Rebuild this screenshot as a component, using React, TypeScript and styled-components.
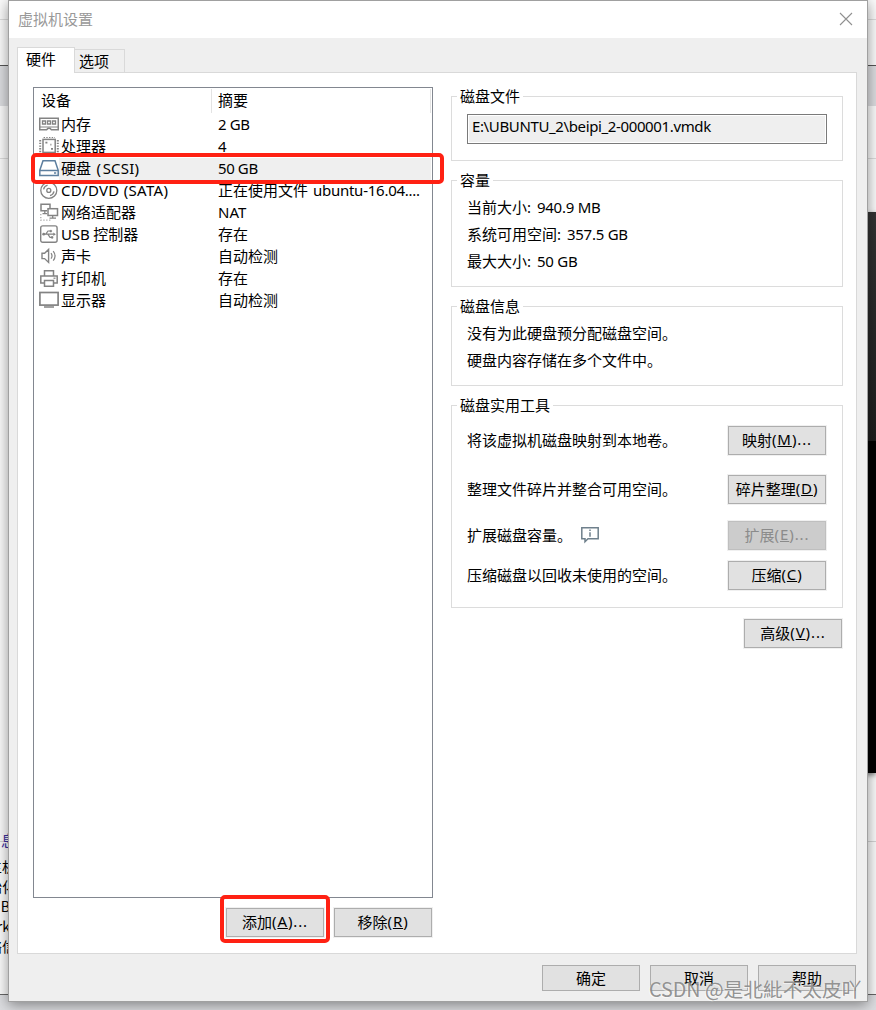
import React from 'react';
import styled, { createGlobalStyle } from 'styled-components';

const Global = createGlobalStyle`
  * { box-sizing: border-box; }
  html, body { margin: 0; padding: 0; background: #fbfbfb; }
  body {
    width: 876px;
    height: 1010px;
    overflow: hidden;
    font-family: 'Noto Sans CJK SC', sans-serif;
    font-size: 15px;
    line-height: 22px;
    color: #000;
  }
`;

const Screen = styled.div`
  position: relative;
  width: 876px;
  height: 1010px;
  overflow: hidden;
`;

/* ---------- window behind the dialog ---------- */
const Backdrop = styled.div`
  display: flex;
  flex-direction: column;
  width: 876px;
  height: 1010px;
`;

const Band = styled.div<{ $h: number; $bg?: string; $line?: string }>`
  flex: none;
  height: ${p => p.$h}px;
  background: ${p => p.$bg ?? '#fbfbfb'};
  border-bottom: ${p => (p.$line ? `1px solid ${p.$line}` : 'none')};
`;

const Display = styled.div`
  flex: none;
  height: 561px;
  margin-left: 440px;
  background: linear-gradient(#333 0, #1d1d1d 229px, #000 229px);
  box-shadow: 0 2px 5px rgba(0, 0, 0, 0.5);
`;

const NotesLayer = styled.div`
  position: absolute;
  left: 0;
  top: 772px;
`;

const Notes = styled.div`
  flex: none;
  width: 16px;
  height: 222px;
  padding-top: 58px;
  display: flex;
  flex-direction: column;
  align-items: flex-end;
  white-space: nowrap;
  font-size: 14px;
  line-height: 20px;
`;

const NoteTitle = styled.div`
  height: 26px;
  font-size: 15px;
  color: #3a2f9c;
`;

const NoteLatin = styled.div`
  padding-right: 6px;
`;

/* ---------- dialog ---------- */
const Dialog = styled.div`
  position: absolute;
  left: 8px;
  top: 0;
  width: 860px;
  height: 1002px;
  display: flex;
  flex-direction: column;
  background: #efefef;
  border: 1px solid #a0a0a0;
  box-shadow: 0 3px 13px rgba(0, 0, 0, 0.42);
`;

const TitleBar = styled.div`
  flex: none;
  height: 37px;
  padding: 0 14px 2px 9px;
  display: flex;
  align-items: center;
  justify-content: space-between;
  background: #fff;
  color: #999;
`;

const Tabs = styled.div`
  flex: none;
  display: flex;
  align-items: flex-end;
  height: 34px;
  padding-left: 8px;
`;

const Tab = styled.div<{ $active?: boolean }>`
  position: relative;
  width: ${p => (p.$active ? 58 : 50)}px;
  height: ${p => (p.$active ? 26 : 23)}px;
  margin-bottom: ${p => (p.$active ? -1 : 0)}px;
  padding-left: ${p => (p.$active ? 8 : 4)}px;
  z-index: ${p => (p.$active ? 1 : 0)};
  line-height: ${p => (p.$active ? 21 : 22)}px;
  background: ${p => (p.$active ? '#fff' : '#efefef')};
  border: 1px solid #d9d9d9;
  border-left-width: ${p => (p.$active ? 1 : 0)}px;
  border-bottom: 0;
`;

const Page = styled.div`
  flex: none;
  width: 840px;
  height: 882px;
  margin-left: 8px;
  padding: 13px 13px 0 15px;
  display: flex;
  justify-content: space-between;
  background: #fff;
  border: 1px solid #d9d9d9;
`;

const LeftColumn = styled.div`
  width: 400px;
  padding-top: 1px;
`;

const DeviceList = styled.div`
  height: 811px;
  border: 1px solid #828790;
`;

const ListHeader = styled.div`
  display: flex;
  height: 26px;
  padding: 1px 1px 0 0;
`;

const HeaderCell = styled.div<{ $w: number; $pad: number }>`
  width: ${p => p.$w}px;
  height: 24px;
  padding-left: ${p => p.$pad}px;
  border-right: 1px solid #e3e3e3;
`;

const Device = styled.div<{ $selected?: boolean }>`
  display: grid;
  grid-template-columns: 25px 159px 1fr;
  height: 22px;
  margin-right: 1px;
  background: ${p =>
    p.$selected ? 'linear-gradient(90deg, #fff 25px, #efefef 25px)' : 'none'};
`;

const IconCell = styled.div`
  padding: 1px 0 0 5px;
  svg { display: block; }
`;

const Cell = styled.div<{ $pad: number }>`
  padding-left: ${p => p.$pad}px;
  height: 20px;
  line-height: 20px;
  white-space: nowrap;
`;

const ListActions = styled.div`
  display: flex;
  justify-content: flex-end;
  gap: 10px;
  margin-top: 10px;
  padding-right: 1px;
`;

const Button = styled.button<{ $h?: number; $flat?: boolean }>`
  flex: none;
  width: 98px;
  height: ${p => p.$h ?? 29}px;
  padding: 0 0 ${p => (p.$flat ? 0 : 2)}px;
  display: flex;
  align-items: center;
  justify-content: center;
  font: inherit;
  line-height: 22px;
  color: #000;
  white-space: nowrap;
  background: #e1e1e1;
  border: 1px solid #adadad;
  border-radius: 0;
  box-shadow: 0 0 0 1px ${p => (p.$flat ? 'transparent' : '#f0f0f0')};
  &:disabled {
    color: #8b8b8b;
    background: #ccc;
    border-color: #bfbfbf;
  }
`;

const RightColumn = styled.div`
  width: 392px;
  display: flex;
  flex-direction: column;
  gap: 9px;
`;

const Group = styled.fieldset<{ $h: number }>`
  flex: none;
  height: ${p => p.$h}px;
  margin: 0;
  padding: 0 15px;
  min-width: 0;
  border: 1px solid #dcdcdc;
`;

const Legend = styled.legend`
  height: 21px;
  margin-left: -10px;
  padding: 0 3px;
  line-height: 19px;
`;

const PathField = styled.div`
  height: 30px;
  margin-top: 7px;
  padding-left: 4px;
  line-height: 22px;
  background: #efefef;
  border: 1px solid #7a7a7a;
  box-shadow: inset 0 0 0 1px #fff;
`;

const Lines = styled.div`
  padding-top: 2px;
`;

const Line = styled.div`
  height: 27px;
  line-height: 27px;
`;

const ToolRow = styled.div<{ $top: number }>`
  display: flex;
  align-items: center;
  justify-content: space-between;
  height: 29px;
  margin-top: ${p => p.$top}px;
  margin-right: 1px;
`;

const ToolLabel = styled.span`
  display: flex;
  align-items: center;
  gap: 8px;
  padding-bottom: 1px;
`;

const Advanced = styled.div`
  display: flex;
  justify-content: flex-end;
  margin-top: 2px;
  padding-right: 1px;
`;

const Footer = styled.div`
  display: flex;
  justify-content: flex-end;
  gap: 10px;
  padding: 11px 11px 0 0;
`;

const Latin = styled.span<{ $ls: number }>`
  font-family: 'Noto Sans', sans-serif;
  line-height: 1;
  letter-spacing: ${p => p.$ls}px;
  white-space: pre;
`;

const Mark = styled.div<{ $x: number; $y: number; $w: number; $h: number }>`
  position: absolute;
  left: ${p => p.$x}px;
  top: ${p => p.$y}px;
  width: ${p => p.$w}px;
  height: ${p => p.$h}px;
  border: 4px solid #ff2113;
  border-radius: 5px;
`;

const Watermark = styled.div`
  position: absolute;
  left: 649px;
  top: 975px;
  font-size: 19.7px;
  line-height: 28px;
  white-space: nowrap;
  color: rgba(135, 135, 135, 0.9);
  text-shadow: -1px 1px 0 rgba(255, 255, 255, 0.55);
`;

const L = ({ children, ls = -0.4 }: { children: React.ReactNode; ls?: number }) => (
  <Latin $ls={ls}>{children}</Latin>
);

const Value = ({ children }: { children: string }) => (
  <><L ls={1}>{': '}</L><L ls={-0.25}>{children}</L></>
);

const Key = ({ k, more }: { k: string; more?: boolean }) => (
  <L ls={0.9}>(<u>{k}</u>){more ? '...' : ''}</L>
);

/* ---------- icons ---------- */
const Svg = ({ children, color = '#838383' }: { children: React.ReactNode; color?: string }) => (
  <svg width="20" height="20" viewBox="0 0 20 20" fill="none" stroke={color} strokeWidth="1.5">
    {children}
  </svg>
);

const MemoryIcon = () => (
  <Svg>
    <path d="M.75 3.25h18.5v11.5H12.4l-1.4-1.4H9l-1.4 1.4H.75z" />
    <path d="M.5 12h19" strokeWidth="1" />
    <path d="M3.5 6h3v3h-3zM8.5 6h3v3h-3zM13.5 6h3v3h-3z" strokeWidth="1.3" />
  </Svg>
);
const CpuIcon = () => (
  <Svg>
    <rect x="4" y="2.4" width="12.2" height="13" />
    <path d="M4.6 .2h11.4M4.6 17.6h11.4" strokeDasharray="1.4 1.3" strokeWidth="1.8" />
    <path d="M1.2 3v13M18.8 3v13" strokeDasharray="1.4 1.3" strokeWidth="2" />
    <path d="M6.4 5.7h2M12 11.8h2M11.4 7.7h1" strokeWidth="1.8" />
  </Svg>
);
const DiskIcon = () => (
  <Svg color="#5d7f9f">
    <path d="M.8 11.3 4 1.7h12l3.2 9.6v5.2H.8z" />
    <path d="M.8 11.5h18.4" />
    <path d="M15 14h2.2" />
  </Svg>
);
const DiscIcon = () => (
  <Svg>
    <circle cx="9.8" cy="9.4" r="8" strokeWidth="1.3" />
    <circle cx="9.8" cy="9.4" r="2" strokeWidth="1.3" />
    <path d="M4.6 8.4a5.4 5.4 0 0 1 4-4.2M15 10.4a5.4 5.4 0 0 1-4 4.2" strokeWidth="1.3" />
  </Svg>
);
const NetworkIcon = () => (
  <Svg>
    <path d="M8 7.8H2V1.2h9v4" />
    <rect x="9" y="5.7" width="9.5" height="6.8" />
    <path d="M13.7 12.5v2.2M10.5 15.2h6.5M5.8 8v2.6M3.5 10.6H8" strokeWidth="1.3" />
    <path d="M1.8 11v6.2H13" strokeDasharray="1.3 1.6" strokeWidth="1.3" stroke="#aaa" />
  </Svg>
);
const UsbIcon = () => (
  <Svg>
    <rect x="1.7" y=".9" width="16.4" height="16.4" rx="2" strokeWidth="1.4" />
    <path d="M4 9.2h11M6.8 9.2 9 6h2.2M8.8 9.2l2.2 3.2h2" strokeWidth="1.2" />
    <path d="M11 5.3h1.6v1.6H11zM12.4 11.6H14v1.6h-1.6z" fill="#838383" strokeWidth=".6" />
    <path d="m14.4 7.5 2.4 1.7-2.4 1.7z" fill="#838383" stroke="none" />
    <circle cx="4.7" cy="9.2" r="1.4" fill="#838383" stroke="none" />
  </Svg>
);
const SoundIcon = () => (
  <Svg>
    <path d="M3 6.2h2.6l4-3.8v13l-4-3.8H3z" strokeWidth="1.4" />
    <path d="M12 6.2c1.2 1.6 1.2 3.8 0 5.4M14.2 4.2c2.2 2.8 2.2 6.6 0 9.4" strokeWidth="1.2" />
  </Svg>
);
const PrinterIcon = () => (
  <Svg>
    <path d="M5.5 6.7v-5h9v5M5 14H1.8V6.9h16.4V14H15" />
    <path d="M5.5 11.4h9v5.8h-9z" />
    <path d="M14.5 9.2h2" strokeWidth="1.2" />
  </Svg>
);
const MonitorIcon = () => (
  <Svg>
    <rect x=".9" y="1.5" width="18.2" height="12.6" strokeWidth="1.7" />
    <path d="M5 16h10" strokeWidth="1.5" />
  </Svg>
);

const CloseIcon = () => (
  <svg width="14" height="14" viewBox="0 0 14 14" fill="none" stroke="#909090" strokeWidth="1.1">
    <path d="m1 1 12 12M13 1 1 13" />
  </svg>
);

const InfoIcon = () => (
  <svg width="20" height="18" viewBox="0 0 20 18" fill="none" stroke="#6f808c" strokeWidth="1.5">
    <path d="M1.8 1.8h16.4v11H8l-3 3v-3H1.8z" />
    <path d="M10 3.6v1.5M10 6.2v4.6" />
  </svg>
);

const devices = [
  { icon: <MemoryIcon />, name: '内存', info: <L>2 GB</L> },
  { icon: <CpuIcon />, name: '处理器', info: <L>4</L> },
  { icon: <DiskIcon />, name: <>硬盘<L ls={1.6}>{' ('}</L><L ls={0.2}>SCSI)</L></>, info: <L>50 GB</L>, selected: true },
  { icon: <DiscIcon />, name: <L ls={0.3}>CD/DVD (SATA)</L>, info: <>正在使用文件<L ls={1}>{' '}</L><L ls={-0.25}>ubuntu-16.04....</L></> },
  { icon: <NetworkIcon />, name: '网络适配器', info: <L ls={0}>NAT</L> },
  { icon: <UsbIcon />, name: <><L ls={-0.15}>{'USB '}</L>控制器</>, info: '存在' },
  { icon: <SoundIcon />, name: '声卡', info: '自动检测' },
  { icon: <PrinterIcon />, name: '打印机', info: '存在' },
  { icon: <MonitorIcon />, name: '显示器', info: '自动检测' },
];

export default function App() {
  return (
    <Screen>
      <Global />
      <Backdrop>
        <Band $h={20} $line="#dcdcdc" />
        <Band $h={46} $line="#555" />
        <Band $h={40} $bg="#dcdde0" />
        <Band $h={53} $line="#dcdcdc" />
        <Band $h={53} />
        <Display />
        <Band $h={69} $bg="transparent" $line="#d4d4d4" />
        <Band $h={153} $bg="transparent" $line="#666" />
        <Band $h={15} $bg="#dcdde0" />
      </Backdrop>
      <NotesLayer>
        <Notes>
          <NoteTitle>息</NoteTitle>
          <div>主机</div>
          <div>始化</div>
          <NoteLatin>B</NoteLatin>
          <NoteLatin>rk</NoteLatin>
          <div>络信</div>
        </Notes>
      </NotesLayer>

      <Dialog>
        <TitleBar>
          虚拟机设置
          <CloseIcon />
        </TitleBar>
        <Tabs>
          <Tab $active>硬件</Tab>
          <Tab>选项</Tab>
        </Tabs>
        <Page>
          <LeftColumn>
            <DeviceList>
              <ListHeader>
                <HeaderCell $w={178} $pad={7}>设备</HeaderCell>
                <HeaderCell $w={219} $pad={6}>摘要</HeaderCell>
              </ListHeader>
              {devices.map((d, i) => (
                <Device key={i} $selected={d.selected}>
                  <IconCell>{d.icon}</IconCell>
                  <Cell $pad={2}>{d.name}</Cell>
                  <Cell $pad={0}>{d.info}</Cell>
                </Device>
              ))}
            </DeviceList>
            <ListActions>
              <Button>添加<Key k="A" more /></Button>
              <Button>移除<Key k="R" /></Button>
            </ListActions>
          </LeftColumn>

          <RightColumn>
            <Group $h={75}>
              <Legend>磁盘文件</Legend>
              <PathField><L ls={-0.37}>E:\UBUNTU_2\beipi_2-000001.vmdk</L></PathField>
            </Group>
            <Group $h={117}>
              <Legend>容量</Legend>
              <Lines>
                <Line>当前大小<Value>940.9 MB</Value></Line>
                <Line>系统可用空间<Value>357.5 GB</Value></Line>
                <Line>最大大小<Value>50 GB</Value></Line>
              </Lines>
            </Group>
            <Group $h={90}>
              <Legend>磁盘信息</Legend>
              <Lines>
                <Line>没有为此硬盘预分配磁盘空间。</Line>
                <Line>硬盘内容存储在多个文件中。</Line>
              </Lines>
            </Group>
            <Group $h={213}>
              <Legend>磁盘实用工具</Legend>
              <ToolRow $top={10}>
                <ToolLabel>将该虚拟机磁盘映射到本地卷。</ToolLabel>
                <Button>映射<Key k="M" more /></Button>
              </ToolRow>
              <ToolRow $top={20}>
                <ToolLabel>整理文件碎片并整合可用空间。</ToolLabel>
                <Button>碎片整理<Key k="D" /></Button>
              </ToolRow>
              <ToolRow $top={17}>
                <ToolLabel>扩展磁盘容量。<InfoIcon /></ToolLabel>
                <Button disabled>扩展<Key k="E" more /></Button>
              </ToolRow>
              <ToolRow $top={11}>
                <ToolLabel>压缩磁盘以回收未使用的空间。</ToolLabel>
                <Button>压缩<Key k="C" /></Button>
              </ToolRow>
            </Group>
            <Advanced>
              <Button>高级<Key k="V" more /></Button>
            </Advanced>
          </RightColumn>
        </Page>
        <Footer>
          <Button $h={26} $flat>确定</Button>
          <Button $h={26} $flat>取消</Button>
          <Button $h={26} $flat>帮助</Button>
        </Footer>
      </Dialog>

      <Mark $x={31} $y={153} $w={413} $h={31} />
      <Mark $x={220} $y={895} $w={110} $h={48} />
      <Watermark>CSDN @是北紕不太皮吖</Watermark>
    </Screen>
  );
}
